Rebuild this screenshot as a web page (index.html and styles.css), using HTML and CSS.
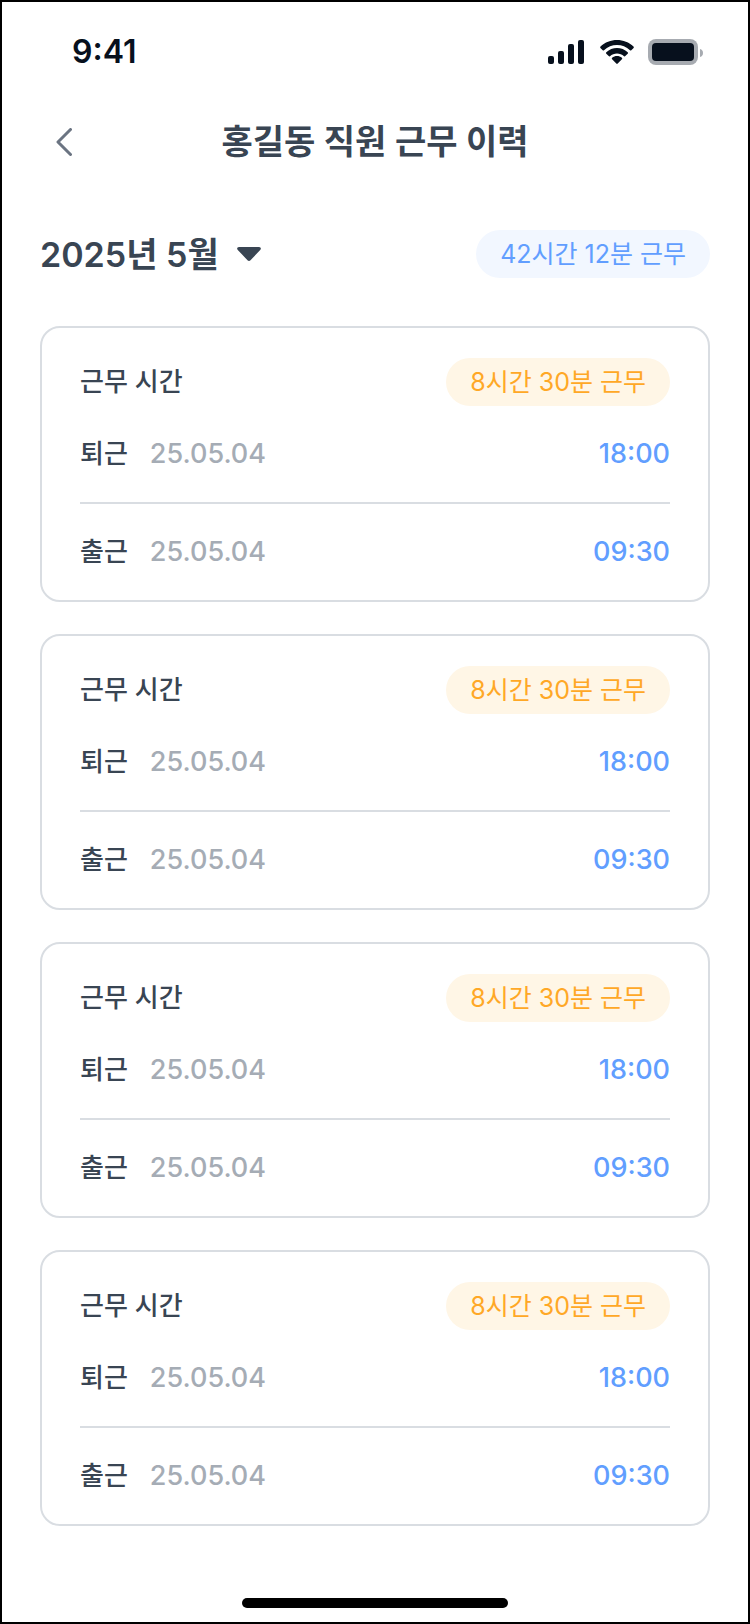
FILE: index.html
```
<!DOCTYPE html>
<html lang="ko">
<head>
  <meta charset="UTF-8">
  <meta name="viewport" content="width=device-width, initial-scale=1.0">
  <title>홍길동 직원 근무 이력</title>
  <link rel="stylesheet" href="styles.css">
</head>
<body>
  <div class="screen">
    <div class="status-bar">
      <span class="clock">9:41</span>
      <div class="status-icons">
        <svg class="signal" width="36" height="24" viewBox="0 0 36 24" aria-hidden="true">
          <rect x="0" y="16" width="6" height="8" rx="2"/>
          <rect x="10" y="11" width="6" height="13" rx="2"/>
          <rect x="20" y="4" width="6" height="20" rx="2"/>
          <rect x="30" y="0" width="6" height="24" rx="2"/>
        </svg>
        <svg class="wifi" width="34" height="24" viewBox="0 0 34 24" aria-hidden="true">
          <path d="M17 0C23.200 0 29 2.300 33.500 6.400C34 6.900 34 7.500 33.600 8L31.300 10.300C30.900 10.700 30.400 10.700 30 10.300C26.400 7 21.800 5.100 17 5.100S7.600 7 4 10.300C3.600 10.700 3.100 10.700 2.700 10.300L.4 8C0 7.500 0 6.900 .5 6.400C5 2.300 10.800 0 17 0Z"/>
          <path d="M17 8C21 8 24.800 9.500 27.700 12.200C28.200 12.700 28.200 13.300 27.700 13.800L25.300 16.100C24.900 16.500 24.400 16.500 24 16.200C22.100 14.400 19.600 13.400 17 13.400S11.900 14.400 10 16.200C9.600 16.500 9.100 16.500 8.700 16.100L6.300 13.800C5.800 13.300 5.800 12.700 6.300 12.200C9.200 9.500 13 8 17 8Z"/>
          <path d="M17 16C18.800 16 20.500 16.600 21.900 17.800C22.400 18.300 22.400 18.800 21.900 19.300L17.700 23.600C17.300 24 16.700 24 16.300 23.600L12.100 19.300C11.600 18.800 11.600 18.300 12.100 17.800C13.500 16.600 15.200 16 17 16Z"/>
        </svg>
        <svg class="battery" width="56" height="26" viewBox="0 0 56 26" aria-hidden="true">
          <rect class="battery-case" x="0" y="0" width="50" height="26" rx="8"/>
          <rect x="4" y="4" width="42" height="18" rx="4"/>
          <path class="battery-case" d="M52 10C54 10.600 55 12 55 14S54 17.400 52 18Z"/>
        </svg>
      </div>
    </div>

    <header class="header">
      <button class="back-button" type="button" aria-label="뒤로">
        <svg width="16" height="28" viewBox="0 0 16 28">
          <path d="M14.500 1.500L2 14L14.500 26.500"/>
        </svg>
      </button>
      <h1>홍길동 직원 근무 이력</h1>
    </header>

    <main class="content">
      <div class="month-row">
        <label class="month">
          <select class="month-select" aria-label="조회 월">
            <option>2025년 5월</option>
          </select>
          <svg width="24" height="14" viewBox="0 0 24 14" aria-hidden="true">
            <path d="M2 0H22C23.800 0 24.500 1.800 23.200 3L13.500 13.200C12.600 14.200 11.400 14.200 10.500 13.200L.8 3C-.5 1.800 .2 0 2 0Z"/>
          </svg>
        </label>
        <span class="badge badge-total">42시간 12분 근무</span>
      </div>

      <section class="card">
        <div class="card-top">
          <h2>근무 시간</h2>
          <span class="badge badge-day">8시간 30분 근무</span>
        </div>
        <div class="record">
          <span class="type">퇴근</span>
          <span class="date">25.05.04</span>
          <time class="time">18:00</time>
        </div>
        <div class="record">
          <span class="type">출근</span>
          <span class="date">25.05.04</span>
          <time class="time">09:30</time>
        </div>
      </section>

      <section class="card">
        <div class="card-top">
          <h2>근무 시간</h2>
          <span class="badge badge-day">8시간 30분 근무</span>
        </div>
        <div class="record">
          <span class="type">퇴근</span>
          <span class="date">25.05.04</span>
          <time class="time">18:00</time>
        </div>
        <div class="record">
          <span class="type">출근</span>
          <span class="date">25.05.04</span>
          <time class="time">09:30</time>
        </div>
      </section>

      <section class="card">
        <div class="card-top">
          <h2>근무 시간</h2>
          <span class="badge badge-day">8시간 30분 근무</span>
        </div>
        <div class="record">
          <span class="type">퇴근</span>
          <span class="date">25.05.04</span>
          <time class="time">18:00</time>
        </div>
        <div class="record">
          <span class="type">출근</span>
          <span class="date">25.05.04</span>
          <time class="time">09:30</time>
        </div>
      </section>

      <section class="card">
        <div class="card-top">
          <h2>근무 시간</h2>
          <span class="badge badge-day">8시간 30분 근무</span>
        </div>
        <div class="record">
          <span class="type">퇴근</span>
          <span class="date">25.05.04</span>
          <time class="time">18:00</time>
        </div>
        <div class="record">
          <span class="type">출근</span>
          <span class="date">25.05.04</span>
          <time class="time">09:30</time>
        </div>
      </section>
    </main>

    <div class="home-indicator"></div>
  </div>
</body>
</html>
```
FILE: styles.css
```
* {
  box-sizing: border-box;
}

body {
  margin: 0;
  font-family: Inter, "Noto Sans CJK KR", sans-serif;
  line-height: 48px;
  color: #394553;
  background-color: #fff;
}

.screen {
  display: flex;
  flex-direction: column;
  min-height: 100vh;
  border: 2px solid #000;
}

/* status bar */
.status-bar {
  display: flex;
  justify-content: space-between;
  align-items: center;
  height: 100px;
  padding: 0 44px 0 70px;
  color: #07101d;
}

.clock {
  font-size: 32px;
  font-weight: 600;
}

.status-icons {
  display: flex;
  align-items: center;
  gap: 16px;
  fill: #07101d;
}

.status-icons .battery {
  margin-left: -2px;
}

.battery-case {
  fill: #a7abb1;
}

/* header */
.header {
  display: grid;
  grid-template-columns: 48px 1fr 48px;
  align-items: center;
  height: 80px;
  padding: 0 38px;
}

.header h1 {
  margin: 0;
  font-size: 34px;
  font-weight: 600;
  text-align: center;
}

.back-button {
  display: flex;
  justify-content: center;
  align-items: center;
  width: 48px;
  height: 48px;
  padding: 0;
  border: none;
  background: none;
  cursor: pointer;
}

.back-button path {
  fill: none;
  stroke: #6b7482;
  stroke-width: 3;
  stroke-linecap: round;
  stroke-linejoin: round;
}

/* history */
.content {
  display: flex;
  flex-direction: column;
  gap: 32px;
  padding: 48px 38px;
}

.month-row {
  display: flex;
  justify-content: space-between;
  align-items: center;
  margin-bottom: 16px;
}

.month {
  display: flex;
  align-items: center;
  gap: 18px;
  fill: #394553;
}

.month-select {
  height: 48px;
  padding: 0;
  border: none;
  appearance: none;
  background: none;
  font-family: inherit;
  font-size: 34px;
  font-weight: 600;
  color: inherit;
}

.badge {
  padding: 0 24px;
  border-radius: 24px;
  font-size: 25px;
  font-weight: 400;
  white-space: nowrap;
}

.badge-total {
  color: #619eff;
  background-color: #f2f7ff;
}

.badge-day {
  color: #ffa826;
  background-color: #fff6e6;
}

.card {
  padding: 30px 38px 0;
  border: 2px solid #d9dde2;
  border-radius: 20px;
}

.card-top {
  display: flex;
  justify-content: space-between;
  align-items: center;
}

.card h2 {
  margin: 0;
  font-size: 26px;
  font-weight: 500;
}

.record {
  display: flex;
  align-items: center;
  gap: 22px;
  height: 96px;
  font-size: 27px;
  font-weight: 500;
}

.record + .record {
  height: 98px;
  border-top: 2px solid #d9dde2;
}

.type {
  font-size: 26px;
}

.date {
  color: #a5acb5;
}

.time {
  margin-left: auto;
  color: #619eff;
}

.home-indicator {
  width: 266px;
  height: 10px;
  margin: auto auto 14px;
  border-radius: 5px;
  background-color: #000;
}
```
